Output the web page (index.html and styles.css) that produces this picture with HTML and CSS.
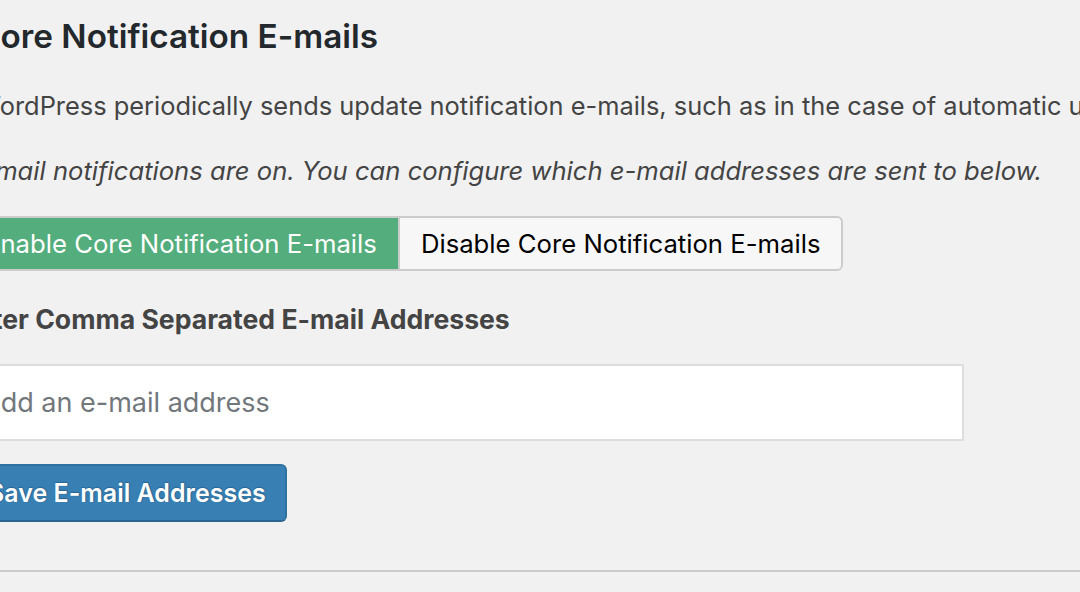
FILE: index.html
```html
<!DOCTYPE html>
<html lang="en">

<head>
  <meta charset="UTF-8" />
  <title>Core Notification E-mails</title>
  <link rel="stylesheet" href="styles.css">
</head>

<body>
  <div class="wrap">
    <h2>Core Notification E-mails</h2>
    <p>WordPress periodically sends update notification e-mails, such as in the case of automatic updates.</p>
    <p class="status"><em>E-mail notifications are on. You can configure which e-mail addresses are sent to below.</em></p>

    <div class="toggle">
      <button class="toggle-on">Enable Core Notification E-mails</button>
      <button class="toggle-off">Disable Core Notification E-mails</button>
    </div>

    <label for="emails">Enter Comma Separated E-mail Addresses</label>
    <input type="text" id="emails" placeholder="Add an e-mail address" />
    <button class="save">Save E-mail Addresses</button>
  </div>
  <hr class="divider">
</body>
</html>
```

FILE: styles.css
```css
* {
  box-sizing: border-box;
  font-family: 'Inter', 'Liberation Sans', sans-serif;
}

body {
  margin: 0;
  background-color: #f1f1f1;
  color: #444;
  overflow: hidden;
}

.wrap {
  margin-left: -24px;
  white-space: nowrap;
}

h2 {
  margin: 16px 0 0;
  font-size: 33.3px;
  line-height: 40px;
  font-weight: 600;
  color: #23282d;
}

p {
  margin: 32px 0 0;
  font-size: 25.4px;
  line-height: 36px;
}

.status {
  margin-top: 29px;
  margin-left: -8px;
  font-size: 25.6px;
}

.toggle {
  display: flex;
  margin-top: 27px;
  margin-left: -14px;
}

.toggle button {
  height: 55px;
  padding: 0 21px;
  font-size: 25.7px;
  border: 2px solid #ccc;
  cursor: pointer;
}

.toggle-on {
  background-color: #53ad7c;
  color: #fff;
  border-radius: 6px 0 0 6px;
}

.toggle-off {
  background-color: #f7f7f7;
  color: #000;
  border-left: none !important;
  border-radius: 0 6px 6px 0;
}

label {
  display: block;
  margin-top: 30px;
  margin-left: -16px;
  font-size: 26.6px;
  line-height: 36px;
  font-weight: 700;
}

input {
  display: block;
  width: 988px;
  height: 77px;
  margin-top: 27px;
  padding: 0 4px;
  font-size: 27px;
  color: #333;
  background-color: #fff;
  border: 2px solid #ddd;
}

input::placeholder {
  color: #72777c;
}

.save {
  display: block;
  height: 58px;
  margin-top: 23px;
  margin-left: -11px;
  padding: 0 19px 0 21px;
  font-size: 25px;
  font-weight: 600;
  color: #fff;
  background-color: #3880b4;
  border: 2px solid #2f71a1;
  border-bottom-color: #2a6592;
  border-radius: 6px;
  text-shadow: 0 -1px 1px #2a6592, 1px 0 1px #2a6592;
  cursor: pointer;
}

.divider {
  margin: 48px 0 0;
  border: none;
  border-top: 2px solid #ccc;
}
```
